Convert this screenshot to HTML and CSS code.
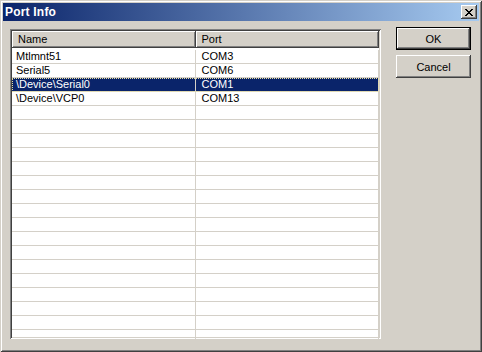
FILE: index.html
```html
<!DOCTYPE html>
<html lang="en">

<head>
    <meta charset="UTF-8">
    <title>Port Info</title>
    <link rel="stylesheet" href="styles.css">
</head>

<body>
    <div class="window">
        <div class="titlebar">
            <span class="title">Port Info</span>
            <button class="close" aria-label="Close">
                <svg width="8" height="7" viewBox="0 0 8 7" shape-rendering="crispEdges">
                    <path fill="#000" d="M0 0h2v1h-2z M6 0h2v1h-2z M1 1h2v1h-2z M5 1h2v1h-2z M2 2h4v1h-4z M3 3h2v1h-2z M2 4h4v1h-4z M1 5h2v1h-2z M5 5h2v1h-2z M0 6h2v1h-2z M6 6h2v1h-2z"/>
                </svg>
            </button>
        </div>
        <div class="client">
            <div class="listview">
                <div class="header">
                    <div class="hcell name">Name</div>
                    <div class="hcell port">Port</div>
                </div>
                <div class="rows">
                    <div class="row"><div class="cell name">Mtlmnt51</div><div class="cell port">COM3</div></div>
                    <div class="row"><div class="cell name">Serial5</div><div class="cell port">COM6</div></div>
                    <div class="row selected"><div class="cell name">\Device\Serial0</div><div class="cell port">COM1</div></div>
                    <div class="row"><div class="cell name">\Device\VCP0</div><div class="cell port">COM13</div></div>
                    <div class="row"><div class="cell name"></div><div class="cell port"></div></div>
                    <div class="row"><div class="cell name"></div><div class="cell port"></div></div>
                    <div class="row"><div class="cell name"></div><div class="cell port"></div></div>
                    <div class="row"><div class="cell name"></div><div class="cell port"></div></div>
                    <div class="row"><div class="cell name"></div><div class="cell port"></div></div>
                    <div class="row"><div class="cell name"></div><div class="cell port"></div></div>
                    <div class="row"><div class="cell name"></div><div class="cell port"></div></div>
                    <div class="row"><div class="cell name"></div><div class="cell port"></div></div>
                    <div class="row"><div class="cell name"></div><div class="cell port"></div></div>
                    <div class="row"><div class="cell name"></div><div class="cell port"></div></div>
                    <div class="row"><div class="cell name"></div><div class="cell port"></div></div>
                    <div class="row"><div class="cell name"></div><div class="cell port"></div></div>
                    <div class="row"><div class="cell name"></div><div class="cell port"></div></div>
                    <div class="row"><div class="cell name"></div><div class="cell port"></div></div>
                    <div class="row"><div class="cell name"></div><div class="cell port"></div></div>
                    <div class="row"><div class="cell name"></div><div class="cell port"></div></div>
                    <div class="row"><div class="cell name"></div><div class="cell port"></div></div>
                </div>
            </div>
            <div class="buttons">
                <button class="btn default">OK</button>
                <button class="btn">Cancel</button>
            </div>
        </div>
    </div>
</body>

</html>
```

FILE: styles.css
```css
/* Basic Reset */
html,
body {
    margin: 0;
    padding: 0;
    background: #d4d0c8;
}

/* Dialog Window */
.window {
    width: 482px;
    height: 352px;
    box-sizing: border-box;
    padding: 3px;
    background: #d4d0c8;
    font-family: 'Liberation Sans', Arial, sans-serif;
    font-size: 11px;
    color: #000000;
    box-shadow: inset 1px 1px #d4d0c8, inset -1px -1px #404040,
        inset 2px 2px #ffffff, inset -2px -2px #808080;
}

/* Title Bar */
.titlebar {
    height: 18px;
    display: flex;
    align-items: center;
    justify-content: space-between;
    padding: 0 2px;
    background: linear-gradient(to right, #0a246a, #a6caf0);
}

.title {
    color: #ffffff;
    font-weight: bold;
    font-size: 12px;
    letter-spacing: 0.2px;
}

.close {
    width: 16px;
    height: 14px;
    padding: 0;
    border: none;
    background: #d4d0c8;
    display: flex;
    align-items: center;
    justify-content: center;
    padding-right: 1px;
    box-shadow: inset -1px -1px #404040, inset 1px 1px #ffffff,
        inset -2px -2px #808080;
}

/* Client Area */
.client {
    display: flex;
    gap: 15px;
    padding: 6px 0 0 7px;
}

/* List View */
.listview {
    width: 371px;
    height: 310px;
    margin-top: 2px;
    box-sizing: border-box;
    padding: 2px;
    background: #ffffff;
    overflow: hidden;
    box-shadow: inset 1px 1px #808080, inset -1px -1px #ffffff,
        inset 2px 2px #404040, inset -2px -2px #d4d0c8;
}

.header {
    display: flex;
    height: 17px;
}

.hcell {
    box-sizing: border-box;
    height: 17px;
    line-height: 17px;
    padding-left: 6px;
    background: #d4d0c8;
    box-shadow: inset -1px -1px #404040, inset 1px 1px #ffffff,
        inset -2px -2px #808080;
}

.hcell.name {
    width: 184px;
}

.hcell.port {
    width: 184px;
}

.rows {
    padding-top: 2px;
}

.row {
    display: flex;
    height: 13px;
    border-bottom: 1px solid #d4d0c8;
}

.cell {
    box-sizing: border-box;
    height: 13px;
    line-height: 13px;
    white-space: nowrap;
    border-right: 1px solid #d4d0c8;
}

.cell.name {
    width: 184px;
    padding-left: 4px;
}

.cell.port {
    width: 184px;
    padding-left: 6px;
}

.row.selected {
    background: #0a246a;
    color: #ffffff;
    outline: 1px dotted #e8e0a0;
    outline-offset: -1px;
}

/* Buttons */
.buttons {
    display: flex;
    flex-direction: column;
    gap: 5px;
}

.btn {
    width: 75px;
    height: 23px;
    box-sizing: border-box;
    padding: 0;
    border: none;
    background: #d4d0c8;
    font-family: 'Liberation Sans', Arial, sans-serif;
    font-size: 11px;
    color: #000000;
    box-shadow: inset -1px -1px #404040, inset 1px 1px #ffffff,
        inset -2px -2px #808080;
}

.btn.default {
    border: 1px solid #000000;
}
```
